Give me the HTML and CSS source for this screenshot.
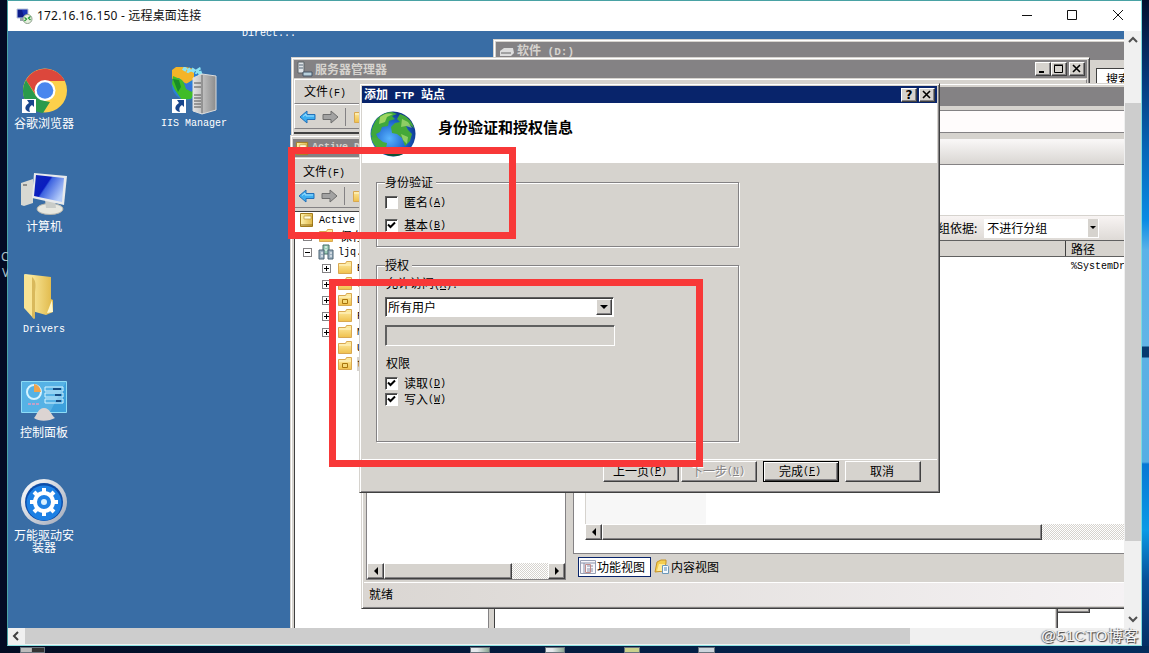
FILE: index.html
```html
<!DOCTYPE html>
<html lang="zh-CN">
<head>
<meta charset="utf-8">
<title>172.16.16.150 - 远程桌面连接</title>
<link rel="stylesheet" href="styles.css">
</head>
<body>
<svg width="0" height="0" class="defs">
  <defs>
    <linearGradient id="gold" x1="0" x2="1" y1="0" y2="0"><stop offset="0" stop-color="#fff3ae"/><stop offset="1" stop-color="#e0b848"/></linearGradient>
    <linearGradient id="goldv" x1="0" x2="0" y1="0" y2="1"><stop offset="0" stop-color="#ffefa8"/><stop offset="1" stop-color="#efc04c"/></linearGradient>
    <linearGradient id="steel" x1="0" x2="1"><stop offset="0" stop-color="#e4e4e4"/><stop offset="1" stop-color="#8c8c8c"/></linearGradient>
    <linearGradient id="screen" x1="0" x2="1" y1="0" y2=".6"><stop offset="0" stop-color="#1028b8"/><stop offset=".45" stop-color="#0a1cc0"/><stop offset=".5" stop-color="#3c62e0"/><stop offset="1" stop-color="#b4ccfa"/></linearGradient>
    <radialGradient id="ocean" cx=".42" cy=".6" r=".65"><stop offset="0" stop-color="#58b4ff"/><stop offset=".6" stop-color="#1c62cc"/><stop offset="1" stop-color="#0b2f80"/></radialGradient>
    <linearGradient id="ring" x1="0" x2="1" y1="0" y2="1"><stop offset="0" stop-color="#fff"/><stop offset="1" stop-color="#a0a8b8"/></linearGradient>
    <symbol id="folder" viewBox="0 0 16 16"><path d="M1.500 3.500h7l1-2h5v12h-13z" fill="url(#goldv)" stroke="#d9a850"/><path d="M2 5h12" stroke="#fff6cc"/></symbol>
    <symbol id="ou" viewBox="0 0 16 16"><use href="#folder"/><path d="M5.500 7.500h5v4h-5z" fill="#f4d878" stroke="#a8740c"/></symbol>
    <symbol id="larrow" viewBox="0 0 17 14"><path d="M1 7l7-6v3.500h8v5H8V13z" fill="#3caef0" stroke="#2370b8"/><path d="M4 6.500l3-2.500v2h8" fill="none" stroke="#a0e0ff"/></symbol>
    <symbol id="rarrow" viewBox="0 0 17 14"><path d="M16 7L9 1v3.500H1v5h8V13z" fill="#a2a2a2" stroke="#6e6e6e"/></symbol>
    <symbol id="shortcut" viewBox="0 0 14 14"><path d="M0 0h14v14H0z" fill="#fff"/><path d="M5 1h7v7l-2-2c-3 2-3 4-2 7C2 12 2 7 7 4z" fill="#17458c"/></symbol>
    <symbol id="book" viewBox="0 0 16 16"><path d="M1.500 1.500h12v13h-12z" fill="url(#gold)" stroke="#a27c1c"/><path d="M5 4h7v3H5z" fill="#fffbdc" stroke="#b08c2c" stroke-width=".6"/><path d="M2 13h12" stroke="#8a6610"/></symbol>
    <symbol id="globe" viewBox="0 0 48 48"><circle cx="24" cy="24" r="22.500" fill="url(#ocean)"/><path d="M7 10C11 5 17 2 23 2l5 2-5 2 3 3-6 2-1 5-6 1-2 5-4 2 2 4-4 2-3-5c0-5 2-10 5-15z" fill="#3fa83c"/><path d="M11 7C16 3 20 3 24 4l-6 3-2 5-6 2z" fill="#b6e06c" opacity=".8"/><path d="M31 4c7 2 12 7 14 14l-4-3-4 1 2 4 4 4-2 7-5 5-3-8-5-4-5-1-1-6 4-4 5-1-3-3z" fill="#44a838"/><path d="M33 9l6 3 4 6-6-2-5 1zM32 24l7 3-1 7-4-4z" fill="#aede78" opacity=".7"/><path d="M2 27l7 1 5 4 4 1-1 5-4 4C7 38 3 33 2 27z" fill="#46ac3c"/><path d="M14 43c3-4 8-4 12-3l9-2 2 4c-6 5-16 6-23 1z" fill="#0c5434"/></symbol>
  </defs>
</svg>
<div class="host">
  <span class="host-letter c">C</span><span class="host-letter v">V</span>
  <i class="under u1"></i><i class="under u2"></i><i class="under u3"></i><i class="under u4"></i><i class="under u5"></i>

  <section class="rdp">
    <header class="rdp-title">
      <svg width="17" height="16" viewBox="0 0 17 16"><path d="M1 1h11v9H1z" fill="#1833b4" stroke="#bfc6d4"/><path d="M2 2h4l2 7H2z" fill="#0d1c88"/><path d="M4 10h5v3H4z" fill="#9aa4ae"/><circle cx="11.500" cy="11" r="4.500" fill="#e8f0e0" stroke="#8ca08c"/><path d="M8.500 9.500l2 1.500-2 2M14.500 8.500l-2 1.500 2 2" fill="none" stroke="#229a34" stroke-width="1.300"/></svg>
      <span class="rdp-name">172.16.16.150 - 远程桌面连接</span>
      <svg class="caption" width="110" height="12" viewBox="0 0 110 12" fill="none" stroke="#111"><path d="M1 6.500h10M46.500 1.500h9v9h-9zM92 1l10 10M102 1L92 11"/></svg>
    </header>
    <div class="rdp-row">
      <main class="remote">
        <span class="label direct l">Direct...</span>
        <div class="shortcut s1"><svg width="48" height="48" viewBox="0 0 48 48"><circle cx="25" cy="23.500" r="22" fill="#fdd04b"/><path d="M6 13A22 22 0 0 1 45 14H25l-9 14z" fill="#dc473c"/><path d="M6 13l10 16 9 5 5 1-7 11A22 22 0 0 1 6 13z" fill="#2a9a4c"/><circle cx="25" cy="23.500" r="10.500" fill="#fff"/><circle cx="25" cy="23.500" r="8.300" fill="#4a86ee"/><use href="#shortcut" x="2" y="32" width="14" height="14"/></svg><span class="label">谷歌浏览器</span></div>
        <div class="shortcut s2"><svg width="48" height="48" viewBox="0 0 48 48"><circle cx="17" cy="18" r="15" fill="#2a80d8"/><path d="M2 12V3l4-3h10l8 2v10l-8 5-7-6z" fill="#f4b428"/><path d="M3 9l9 4 5 8 8 4-4 7-9 1-7-10-3-6z" fill="#40bc28"/><path d="M14 16l8 2v7l-6-3z" fill="#3474d8"/><path d="M3 12l6 1 2 7-3 5z" fill="#188c28"/><path d="M13 1l5 3 3-2 5 3 3-2 2 6" stroke="#8ce4f4" stroke-width="4" stroke-dasharray="4 1" fill="none"/><path d="M23 11l9-4 14 2v34l-14 4-9-3z" fill="url(#steel)" stroke="#ddd"/><path d="M32 8v38" stroke="#666"/><path d="M24 16h7M24 20h7M24 28h7M24 31h7M24 34h7M24 37h7M24 40h7" stroke="#555"/><use href="#shortcut" x="2" y="32" width="14" height="14"/></svg><span class="label l">IIS Manager</span></div>
        <div class="shortcut s3"><svg width="48" height="48" viewBox="0 0 48 48"><path d="M1 13l12-4v24l-9 3-3-1z" fill="#d8d8d2"/><path d="M3 15h4" stroke="#444"/><ellipse cx="30" cy="39" rx="13" ry="5.500" fill="#e8e8e0" stroke="#b4b4ac"/><path d="M25 30h10l1 8h-10z" fill="#c9ccc8"/><path d="M14 3l33 3-3 29-32-7z" fill="#e8eaec"/><path d="M16 5l28 3-2 24-28-6z" fill="url(#screen)"/></svg><span class="label">计算机</span></div>
        <div class="shortcut s4"><svg width="48" height="48" viewBox="0 0 48 48"><path d="M5 1l26 3v22l2 1v12l-7 3-14-4z" fill="url(#gold)"/><path d="M4 1l8 4 2 41L4 35z" fill="#f8e494"/><path d="M12 4c4 3 4 8 3 15v27l-3-2z" fill="#d9b95c"/><path d="M27 40l5-13 1 12z" fill="#fff7cc"/></svg><span class="label l">Drivers</span></div>
        <div class="shortcut s5"><svg width="48" height="48" viewBox="0 0 48 48"><path d="M1.500 5.500h45v31h-45z" fill="#3ca0dc" stroke="#8edcf6"/><path d="M2 6h44L30 36H2z" fill="#70c4ee" opacity=".5"/><circle cx="14" cy="16" r="7" fill="none" stroke="#d5f3ff" stroke-width="2"/><path d="M14 16V8a8 8 0 0 1 7 8z" fill="#f0a44c"/><path d="M25 11h18v4H25zM25 17h18v4H25zM25 23h18v4H25z" fill="none" stroke="#d5f3ff"/><path d="M33 13h8M35 19h6M36 25h5" stroke="#164c84" stroke-width="2"/><path d="M8 28h12" stroke="#c0a0c8" stroke-width="2" stroke-dasharray="3 1"/><path d="M14 42c3-3 4-10 10-10s7 7 11 10c-5 3-16 4-21 0z" fill="#dcd4d2"/></svg><span class="label">控制面板</span></div>
        <div class="shortcut s6"><svg width="48" height="48" viewBox="0 0 48 48"><circle cx="24" cy="23" r="23" fill="url(#ring)"/><circle cx="24" cy="23" r="19" fill="#0c4ca8"/><circle cx="24" cy="24" r="17.500" fill="#1d80e4"/><circle cx="24" cy="23" r="9" fill="none" stroke="#fff" stroke-width="4"/><g stroke="#fff" stroke-width="4"><path d="M24 9v5M24 32v5M10 23h5M33 23h5M14 13l4 4M30 29l4 4M34 13l-4 4M14 33l4-4"/></g><circle cx="24" cy="23" r="3" fill="#d8f0ff"/></svg><span class="label">万能驱动安<br>装器</span></div>

        <section class="win explorer">
          <header class="bar inactive"><svg width="16" height="16" viewBox="0 0 16 16"><path d="M1 8l4-3h9l1 5-3 3H1z" fill="#ddd"/><path d="M2 10h10" stroke="#666"/></svg><b>软件<span class="l"> (D:)</span></b></header>
          <div class="explorer-search"><span>搜索</span></div>
          <div class="explorer-body"></div>
        </section>

        <section class="win server">
          <header class="bar inactive"><svg width="16" height="16" viewBox="0 0 16 16"><path d="M1 1h6v11H1z" fill="#e0e4e8" stroke="#5c6468"/><path d="M2 4h4M2 7h4" stroke="#567"/><path d="M6 11h9v4H6z" fill="#b8d0dc" stroke="#456"/></svg><b>服务器管理器</b>
            <span class="ctl"><i class="btn"><svg width="10" height="10"><path d="M1 8h5" stroke="#000" stroke-width="2"/></svg></i><i class="btn"><svg width="10" height="10"><path d="M.5 1.500h8v7h-8zM0 1h9" fill="none" stroke="#000"/></svg></i><i class="btn gap"><svg width="10" height="10"><path d="M1 1l7 7M8 1L1 8" stroke="#000" stroke-width="1.600"/></svg></i></span>
          </header>
          <div class="menu">文件<span class="l">(F)</span></div>
          <div class="tools"><svg width="17" height="14"><use href="#larrow"/></svg><svg width="17" height="14"><use href="#rarrow"/></svg><i class="sep"></i><svg width="16" height="16"><use href="#folder"/></svg></div>
          <div class="server-rest"></div>
        </section>

        <section class="win ad">
          <header class="bar inactive"><svg width="15" height="15"><use href="#book"/></svg><b class="l">Active Directory</b></header>
          <div class="menu">文件<span class="l">(F)</span></div>
          <div class="tools"><svg width="17" height="14"><use href="#larrow"/></svg><svg width="17" height="14"><use href="#rarrow"/></svg><i class="sep"></i><svg width="16" height="16"><use href="#folder"/></svg></div>
          <div class="ad-panes">
            <div class="tree">
              <div class="node d0"><svg width="16" height="16"><use href="#book"/></svg><span class="l">Active</span></div>
              <div class="node d1"><i class="exp plus"></i><svg width="16" height="16"><use href="#folder"/></svg>保存</div>
              <div class="node d1"><i class="exp"></i><svg width="16" height="16" viewBox="0 0 16 16"><path d="M5 1h6v9H5z" fill="#9ccdb8" stroke="#456c64"/><path d="M1 6h5v9H1zM10 6h5v9h-5z" fill="#9cb0c0" stroke="#4c6474"/><path d="M7 3h2M7 6h2M3 9h2M3 12h2M12 9h2M12 12h2" stroke="#fff"/></svg><span class="l">ljq.</span></div>
              <div class="node d2"><i class="exp plus"></i><svg width="16" height="16"><use href="#folder"/></svg><span class="l">B</span></div>
              <div class="node d2"><i class="exp plus"></i><svg width="16" height="16"><use href="#folder"/></svg><span class="l">C</span></div>
              <div class="node d2"><i class="exp plus"></i><svg width="16" height="16"><use href="#ou"/></svg><span class="l">D</span></div>
              <div class="node d2"><i class="exp plus"></i><svg width="16" height="16"><use href="#folder"/></svg><span class="l">F</span></div>
              <div class="node d2"><i class="exp plus"></i><svg width="16" height="16"><use href="#folder"/></svg><span class="l">M</span></div>
              <div class="node d2"><i class="exp none"></i><svg width="16" height="16"><use href="#folder"/></svg><span class="l">U</span></div>
              <div class="node d2"><i class="exp none"></i><svg width="16" height="16"><use href="#ou"/></svg><span class="l sel">t</span></div>
            </div>
            <div class="ad-list"></div>
          </div>
        </section>

        <section class="win iis">
          <header class="bar inactive"></header>
          <div class="address"></div>
          <div class="ribbon"></div>
          <div class="iis-main">
            <div class="conn">
              <div class="conn-tree"></div>
              <div class="sbar"><i class="btn arrow left"></i><i class="thumb t1"></i><i class="track"></i><i class="btn arrow right"></i></div>
            </div>
            <div class="content">
              <div class="feature">
                <div class="feature-title"></div>
                <div class="filter"><span class="filter-label">组依据:</span><span class="group-select">不进行分组<i class="drop"></i></span></div>
                <div class="cols"><span class="col-path">路径</span></div>
                <div class="list"><div class="sorted"></div><span class="path l">%SystemDrive%</span></div>
                <div class="sbar"><i class="btn arrow left"></i><i class="thumb t2"></i><i class="track"></i></div>
              </div>
              <div class="tabs"><span class="tab on"><svg width="16" height="16" viewBox="0 0 16 16"><path d="M.5 1.500h15v13H.5z" fill="#f7f7fb" stroke="#98a0b4"/><path d="M1 4h14M4 4v10M7 7h6M7 10h6M7 12h6" stroke="#8890a8"/><path d="M5.500 5.500h5v8h-5z" fill="none" stroke="#c08c8c"/></svg>功能视图</span><span class="tab"><svg width="16" height="16" viewBox="0 0 16 16"><path d="M1 13L3 3l4-2h5v3l-2 8z" fill="#f4cf50" stroke="#c89428"/><path d="M5 5h6l-2 7H3z" fill="#ffeb9a"/><path d="M8.500 6.500h5l1 1v7h-6z" fill="#f4faff" stroke="#6c98b8"/><path d="M10 9h3M10 11h3" stroke="#5888b0"/></svg>内容视图</span></div>
            </div>
          </div>
          <footer class="status">就绪</footer>
        </section>

        <section class="win dialog">
          <header class="bar active"><b>添加<span class="l"> FTP </span>站点</b>
            <span class="ctl"><i class="btn q">?</i><i class="btn gap"><svg width="10" height="10"><path d="M1 1l7 7M8 1L1 8" stroke="#000" stroke-width="1.600"/></svg></i></span>
          </header>
          <div class="banner"><svg width="48" height="48"><use href="#globe"/></svg><h1>身份验证和授权信息</h1></div>
          <div class="form">
            <div class="group auth">
              <span class="legend">身份验证</span>
              <label class="check a1"><i class="box"></i>匿名<span class="l">(<u>A</u>)</span></label>
              <label class="check a2"><i class="box"><svg width="9" height="9"><path d="M1 3.500l2.500 2.500L8 1.500" fill="none" stroke="#000" stroke-width="2"/></svg></i>基本<span class="l">(<u>B</u>)</span></label>
            </div>
            <div class="group perm">
              <span class="legend">授权</span>
              <div class="allow">允许访问<span class="l">(<u>A</u>):</span></div>
              <div class="select">所有用户<i class="btn drop"></i></div>
              <div class="input"></div>
              <div class="rights">权限</div>
              <label class="check p1"><i class="box"><svg width="9" height="9"><path d="M1 3.500l2.500 2.500L8 1.500" fill="none" stroke="#000" stroke-width="2"/></svg></i>读取<span class="l">(<u>D</u>)</span></label>
              <label class="check p2"><i class="box"><svg width="9" height="9"><path d="M1 3.500l2.500 2.500L8 1.500" fill="none" stroke="#000" stroke-width="2"/></svg></i>写入<span class="l">(<u>W</u>)</span></label>
            </div>
          </div>
          <footer class="actions"><span class="push">上一页<span class="l">(<u>P</u>)</span></span><span class="push off">下一步<span class="l">(<u>N</u>)</span></span><span class="push default">完成<span class="l">(<u>F</u>)</span></span><span class="push">取消</span></footer>
        </section>
      </main>
      <div class="vscroll"><svg width="16" height="16" viewBox="0 0 16 16"><path d="M4 11l4-4 4 4" fill="none" stroke="#505050" stroke-width="2"/></svg><i class="vthumb"></i><svg width="16" height="16" viewBox="0 0 16 16"><path d="M4 5l4 4 4-4" fill="none" stroke="#505050" stroke-width="2"/></svg></div>
    </div>
    <div class="hscroll"><svg width="17" height="16" viewBox="0 0 17 16"><path d="M10 4L6 8l4 4" fill="none" stroke="#404040" stroke-width="2"/></svg><i class="hthumb"></i></div>
  </section>
  <div class="mark m1"></div>
  <div class="mark m2"></div>
  <span class="watermark">@51CTO博客</span>
</div>
</body>
</html>
```
FILE: styles.css
```css
* { box-sizing: border-box; }
body { margin: 0; font: 12px/12px "Noto Sans CJK SC", sans-serif; color: #000; }
i { font-style: normal; display: block; }
svg { display: block; flex: none; }
.defs { position: absolute; }
.l { font-family: "Liberation Mono", monospace; font-size: 10px; white-space: pre; }

.host { position: relative; width: 1149px; height: 653px; overflow: hidden; padding: 0 0 0 7px;
  background: linear-gradient(90deg, #020c22, #031c40 50%, #032c5c) 0 646px / 1149px 7px no-repeat, linear-gradient(#04102e 0, #063a7c 80px, #0667b8 150px, #0a8be4 220px, #5ab2e8 250px, #62b4e6 346px, #063a70 347px, #063a70 357px, #5cb0e4 358px, #56aee4 462px, #0878d4 464px, #0a9ae6 530px, #075098 580px, #042c60 653px) 1142px 0 / 7px 653px no-repeat, #030b24; }
.host-letter { position: absolute; left: 1px; color: #a9c4cc; font: 12px/12px "Noto Sans"; }
.c { top: 251px; } .v { top: 267px; left: 2px; }
.under { position: absolute; top: 647px; width: 20px; height: 6px; border: 1px solid #68727c; background: linear-gradient(90deg, #e4e8ec 35%, #8ca894); }
.u1 { left: 20px; width: 25px; background: linear-gradient(90deg, #bbb 45%, #333 50%); } .u2 { left: 470px; } .u3 { left: 545px; } .u4 { left: 624px; width: 16px; background: #c9d08c; } .u5 { left: 698px; width: 17px; background: #ccd4dc; }

.rdp { width: 1135px; height: 646px; border: 1px solid #49a2a4; border-bottom-color: #8ce4e4; border-right-color: #7adce0; background: #f0f0f0; }
.rdp-title { height: 30px; background: #fff; display: flex; align-items: center; padding-left: 8px; }
.rdp-name { font: 12px/16px "Noto Sans", "Noto Sans CJK SC", sans-serif; letter-spacing: .18px; margin-left: 4px; color: #111; white-space: nowrap; }
.caption { margin: -2px 10px 0 auto; }
.rdp-row { display: flex; height: 597px; }
.remote { position: relative; width: 1116px; height: 597px; overflow: hidden; background: #396da5; }
.vscroll { width: 17px; display: flex; flex-direction: column; padding-left: 1px; background: #f0f0f0; }
.vthumb { margin: 56px 0 auto; height: 438px; background: #cdcdcd; }
.hscroll { display: flex; height: 17px; background: #f0f0f0; }
.hthumb { width: 885px; height: 16px; background: #cdcdcd; }

/* desktop shortcuts */
.shortcut { position: absolute; width: 80px; display: flex; flex-direction: column; align-items: center; gap: 2px; }
.label { color: #fff; text-align: center; white-space: nowrap; }
.label.l { padding-top: 1px; }
.direct { position: absolute; left: 234px; top: -4px; font-size: 10px; }
.s1 { left: -4px; top: 36px; } .s2 { left: 146px; top: 36px; } .s3 { left: -4px; top: 139px; }
.s4 { left: -4px; top: 242px; } .s5 { left: -4px; top: 345px; } .s6 { left: -4px; top: 448px; }

/* classic windows */
.win { position: absolute; background: #d6d3ce; display: flex; flex-direction: column; padding: 2px;
  border: 1px solid; border-color: #d6d3ce #404040 #404040 #d6d3ce; box-shadow: inset 1px 1px #fff, inset -1px -1px #848284; }
.bar { height: 18px; flex: none; display: flex; align-items: center; gap: 2px; padding-left: 2px; color: #d6d3ce; }
.bar b { font-weight: 700; white-space: nowrap; }
.inactive { background: #848284; }
.active { background: #08246b; color: #fff; }
.ctl { margin-left: auto; display: flex; padding-right: 2px; }
.btn { width: 16px; height: 14px; flex: none; display: flex; align-items: center; justify-content: center; background: #d6d3ce; color: #000;
  border: 1px solid; border-color: #fff #404040 #404040 #fff; box-shadow: inset -1px -1px #848284; }
.gap { margin-left: 2px; }
.q { font: bold 12px/12px "DejaVu Sans", sans-serif; }
.menu { height: 25px; flex: none; padding: 5px 0 0 9px; border: 1px solid; border-color: #fff #848284 #848284 #fff; }
.tools { height: 25px; flex: none; display: flex; align-items: center; gap: 6px; padding-left: 4px; border: 1px solid; border-color: #fff #848284 #848284 #fff; }
.sep { width: 1px; height: 18px; background: #848284; margin-right: 1px; }

.explorer { left: 485px; top: 8px; width: 660px; height: 620px; }
.explorer .bar { padding-left: 3px; }
.explorer .bar .l { font-size: 11px; }
.explorer-search { height: 28px; margin-top: 8px; flex: none; display: flex; }
.explorer-search span { width: 90px; margin-left: 600px; padding: 4px 0 0 9px; background: #fff; border: 1px solid #404040; white-space: nowrap; }
.explorer-body { flex: 1; background: #fff; }
.server { left: 283px; top: 26px; width: 799px; height: 556px; }
.server .menu { margin-top: 1px; }
.server .bar { padding-left: 3px; }
.server-rest { margin-top: 3px; border-top: 2px solid #404040; }

.ad { left: 282px; top: 104px; width: 768px; height: 540px; }
.ad .bar { margin-top: 1px; }
.ad .menu { margin-top: 1px; padding-top: 6px; }
.ad .tools { padding-left: 4px; }
.ad-panes { flex: 1; display: flex; gap: 5px; margin-top: 3px; padding-left: 1px; }
.tree { width: 195px; background: #fff; border: 1px solid #404040; border-right-color: #848284; padding: 0 0 0 4px; overflow: hidden; }
.ad-list { flex: 1; background: #fff; border-left: 1px solid #404040; }
.node { height: 16px; display: flex; align-items: center; gap: 4px; white-space: nowrap; }
.node .l { padding-top: 2px; }
.d1 { padding-left: 4px; } .d2 { padding-left: 23px; }
.d1, .d2 { gap: 6px; }
.d1 .l, .d2 .l { margin-left: -2px; }
.exp { width: 9px; height: 9px; flex: none; border: 1px solid #848284; background: linear-gradient(#000, #000) 1px 3px / 5px 1px no-repeat, #fff; }
.plus { background: linear-gradient(#000, #000) 1px 3px / 5px 1px no-repeat, linear-gradient(#000, #000) 3px 1px / 1px 5px no-repeat, #fff; }
.none { visibility: hidden; }
.sel { background: #d6d3ce; }

.iis { left: 353px; top: 52px; width: 790px; height: 526px; }
.iis > .bar { height: 19px; margin-top: 1px; }
.address { height: 23px; flex: none; margin-top: 4px; background: #fffcfc; border: 1px solid #848284; }
.ribbon { height: 26px; flex: none; margin-top: 6px; background: linear-gradient(#faf8f8, #d9d6d2); border-bottom: 1px solid #848284; }
.iis-main { flex: 1; min-height: 0; display: flex; padding-left: 2px; gap: 7px; }
.conn { width: 200px; flex: none; display: flex; flex-direction: column; margin-bottom: 2px; border: 1px solid #848284; }
.conn-tree { flex: 1; background: #fff; }
.content { flex: 1; display: flex; flex-direction: column; }
.feature { flex: 1; display: flex; flex-direction: column; background: #fff; padding: 0 0 13px 11px; border: 1px solid #848284; border-top: 0; }
.feature-title { height: 50px; flex: none; }
.filter { height: 25px; flex: none; display: flex; align-items: center; padding-left: 353px; border-top: 1px solid #d6d3ce; background: linear-gradient(#f8f4f3, #dedad6); white-space: nowrap; }
.group-select { width: 115px; height: 19px; margin-left: 7px; padding: 3px 0 0 3px; background: #fff; display: flex; justify-content: space-between; }
.drop::after, .arrow::after { content: ""; border: 4px solid transparent; }
.drop::after { border-top-color: #000; border-bottom: 0; }
.group-select .drop { width: 10px; height: 18px; margin: -3px 1px 0 0; display: flex; align-items: center; justify-content: center; background: #d6d3ce; }
.group-select .drop::after { border-width: 3px 3px 0; }
.cols { height: 17px; flex: none; background: #d6d3ce; border: solid #606060; border-width: 1px 0; padding-left: 480px; }
.col-path { display: block; height: 15px; padding: 2px 0 0 5px; border-left: 1px solid #404040; }
.list { flex: 1; display: flex; border-left: 1px solid #d6d3ce; }
.sorted { width: 120px; background: #f7f7f7; }
.path { margin: 4px 0 0 365px; }
.sbar { height: 16px; flex: none; display: flex; }
.sbar .btn { width: 17px; height: 16px; }
.left::after { border-width: 4px 4px 4px 0; border-right-color: #000; }
.right::after { border-width: 4px 0 4px 4px; border-left-color: #000; }
.thumb { height: 16px; flex: none; background: #d6d3ce; border: 1px solid; border-color: #fff #404040 #404040 #fff; box-shadow: inset -1px -1px #848284; }
.t1 { width: 128px; } .t2 { width: 440px; }
.track { flex: 1; background: repeating-conic-gradient(#d6d3ce 0 25%, #fff 0 50%) 0 0 / 2px 2px; }
.tabs { height: 28px; flex: none; display: flex; align-items: center; padding: 0 0 2px 5px; }
.tab { height: 20px; padding: 0 4px 0 2px; display: flex; align-items: center; gap: 1px; border: 1px solid transparent; }
.on { background: #fff; border-color: #08246b; width: 73px; padding-left: 1px; }
.status { height: 24px; flex: none; padding: 5px 0 0 5px; border-top: 1px solid #fff; background: linear-gradient(90deg, #dad6d2, #f6f3f5); }

.dialog { left: 351px; top: 52px; width: 581px; height: 410px; }
.dialog .bar { height: 17px; padding-left: 2px; }
.dialog .bar .l { font-size: 11px; }
.banner { height: 60px; flex: none; background: #fff; display: flex; padding: 7px 0 0 7px; }
.banner h1 { margin: 9px 0 0 21px; font: 700 15px/15px "Noto Sans CJK SC", sans-serif; }
.form { width: 377px; padding: 19px 0 0 14px; display: flex; flex-direction: column; gap: 18px; }
.group { border: 1px solid #848284; box-shadow: 1px 1px #fff, inset 1px 1px #fff; padding-left: 8px; display: flex; flex-direction: column; align-items: flex-start; }
.auth { height: 65px; } .perm { height: 177px; }
.legend { margin-top: -7px; background: #d6d3ce; padding: 0 3px 0 0; flex: none; }
.check { height: 12px; display: flex; align-items: center; gap: 6px; flex: none; }
.check .l { margin: 2px 0 0 -6px; }
.box { width: 13px; height: 13px; background: #fff; border: 1px solid; border-color: #606060 #fff #fff #606060; box-shadow: inset 1px 1px #404040; padding: 1px 0 0 1px; }
.a1 { margin-top: 8px; } .a2 { margin-top: 11px; }
.allow { margin: 6px 0 0 1px; flex: none; }
.select { width: 229px; height: 20px; flex: none; margin-top: 5px; padding: 1px 1px 0 2px; line-height: 16px; background: #fff; display: flex; justify-content: space-between; border: 1px solid; border-color: #606060 #fff #fff #606060; box-shadow: inset 1px 1px #404040; }
.select .btn { width: 16px; height: 16px; }
.input { width: 230px; height: 21px; flex: none; margin-top: 8px; border: 1px solid; border-color: #606060 #fff #fff #606060; box-shadow: inset 1px 1px #606060; }
.rights { margin: 11px 0 0 1px; flex: none; }
.p1 { margin-top: 8px; } .p2 { margin-top: 4px; }
.actions { margin-top: 17px; border-top: 1px solid #fff; padding: 1px 16px 0 0; display: flex; justify-content: flex-end; }
.push { width: 76px; height: 21px; padding: 0 2px 2px 0; display: flex; align-items: center; justify-content: center; border: 1px solid; border-color: #fff #404040 #404040 #fff; box-shadow: inset -1px -1px #848284; margin-left: 6px; }
.push .l { margin-top: 2px; }
.push:nth-child(2) { margin-left: 2px; }
.off { color: #848284; text-shadow: 1px 1px #fff; }
.default { border-color: #000; box-shadow: inset 1px 1px #fff, inset -1px -1px #404040, inset -2px -2px #848284; }

/* highlight frames drawn over the desktop */
.mark { position: absolute; border: 7px solid #f83838; }
.m1 { left: 288px; top: 147px; width: 228px; height: 92px; }
.m2 { left: 329px; top: 279px; width: 374px; height: 188px; }
.watermark { position: absolute; left: 1041px; top: 627px; font: 15px/18px "Liberation Sans", "Noto Sans CJK SC", sans-serif; letter-spacing: .6px; color: #f6f6f6; text-shadow: 1px 1px 1px #333, -1px 0 1px #777; white-space: nowrap; }
```
